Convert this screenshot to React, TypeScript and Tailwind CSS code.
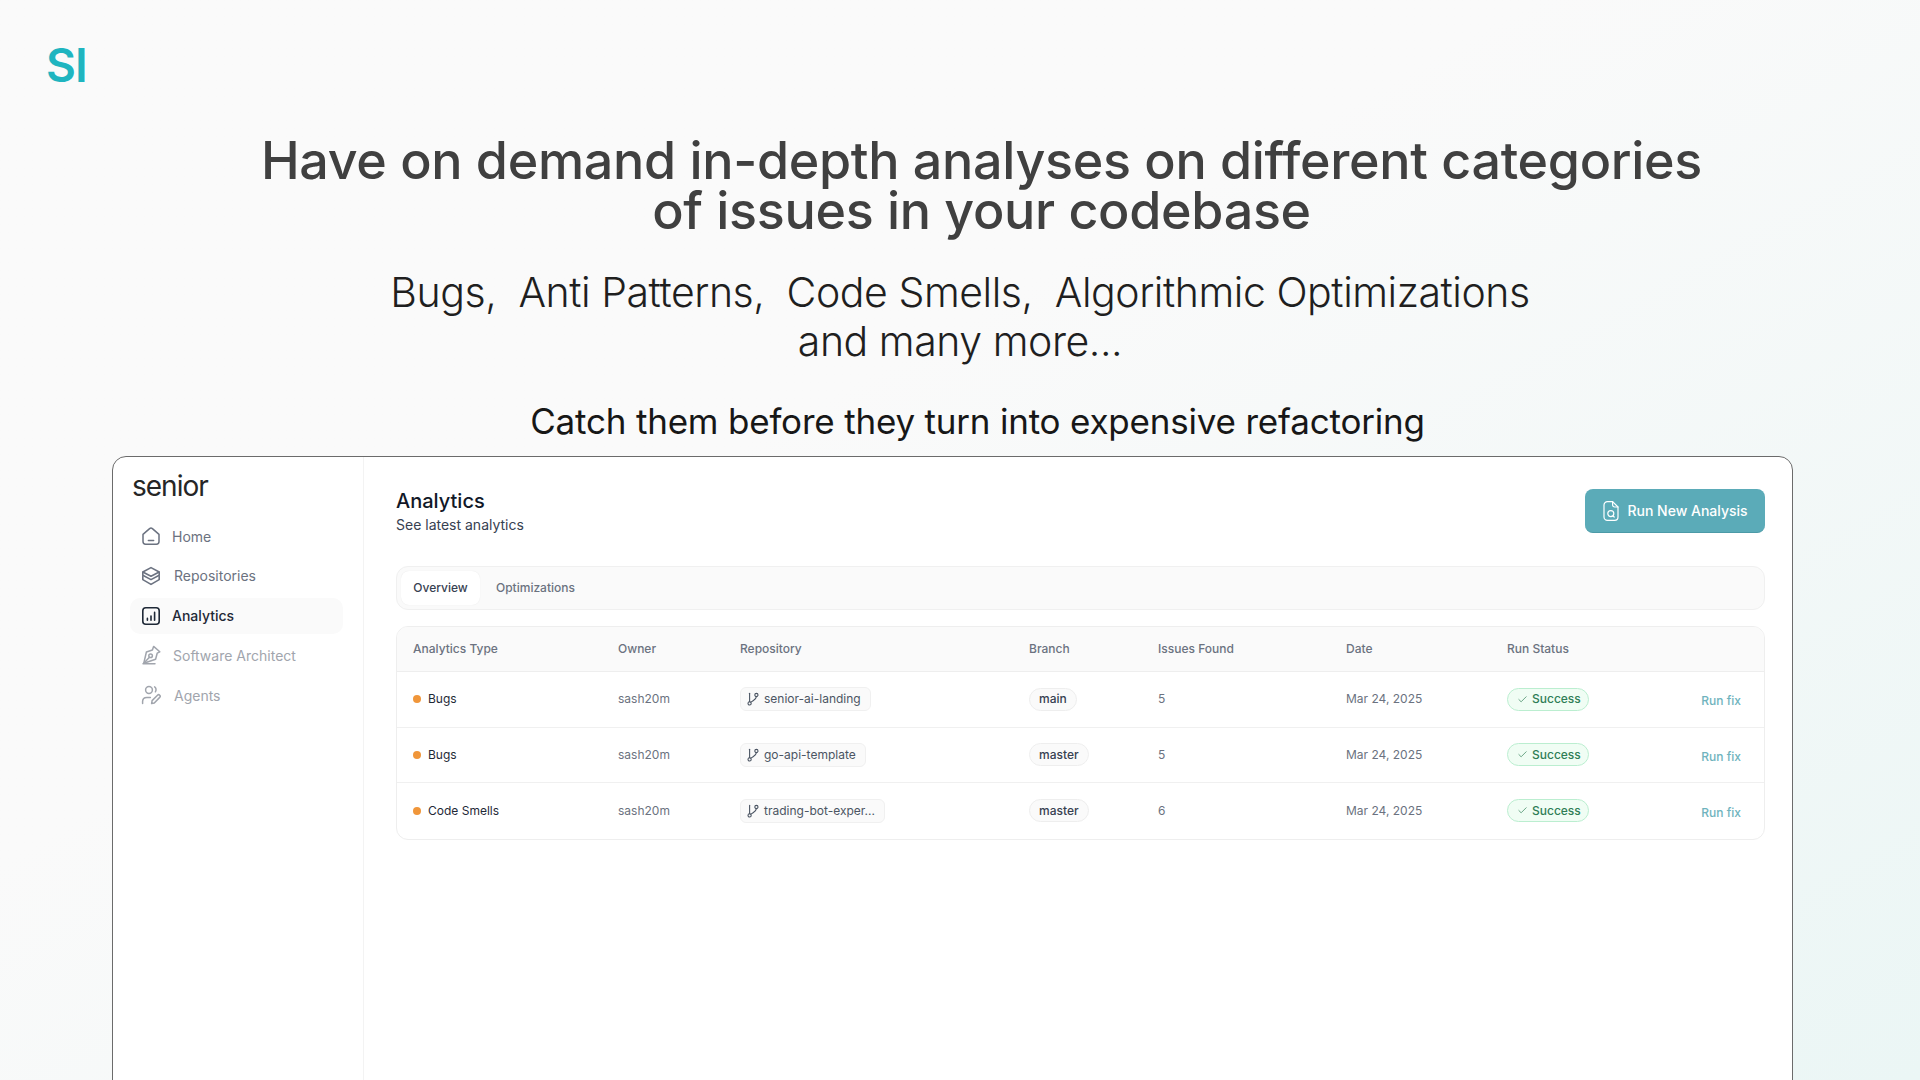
import { Check } from 'lucide-react'

const rows = [
  { type: 'Bugs', repo: 'senior-ai-landing', branch: 'main', issues: '5' },
  { type: 'Bugs', repo: 'go-api-template', branch: 'master', issues: '5' },
  { type: 'Code Smells', repo: 'trading-bot-exper...', branch: 'master', issues: '6' },
]

const cols = 'grid grid-cols-[205px_122px_289px_129px_188px_161px_1fr] pl-[16px] items-center'

function HomeIcon() {
  return (
    <svg width="20" height="20" viewBox="0 0 20 20" fill="none" stroke="currentColor" strokeWidth="1.5" strokeLinecap="round" strokeLinejoin="round">
      <path d="M2 8.4 8.6 2.6a2.1 2.1 0 0 1 2.8 0L18 8.4v7.2a2.6 2.6 0 0 1-2.6 2.6H4.6A2.6 2.6 0 0 1 2 15.6z" />
      <path d="M7.4 14.6h5.2" />
    </svg>
  )
}

function StackIcon() {
  return (
    <svg width="20" height="20" viewBox="0 0 20 20" fill="none" stroke="currentColor" strokeWidth="1.6" strokeLinecap="round" strokeLinejoin="round">
      <path d="M10 1.6 18.2 6 10 10.2 1.8 6z" />
      <path d="M1.8 6.4v2.8L10 13.6l8.2-4.4V6.4" />
      <path d="M1.8 10.4v3.2L10 18.4l8.2-4.8v-3.2" />
    </svg>
  )
}

function ChartIcon() {
  return (
    <svg width="20" height="20" viewBox="0 0 20 20" fill="none" stroke="currentColor" strokeWidth="1.6" strokeLinecap="round">
      <rect x="1.8" y="1.8" width="16.4" height="16.4" rx="3" />
      <path d="M6.4 14.2v-1.8M10 14.2V10M13.6 14.2V6.4" />
    </svg>
  )
}

function PenIcon() {
  return (
    <svg width="20" height="20" viewBox="0 0 20 20" fill="none" stroke="currentColor" strokeWidth="1.5" strokeLinecap="round" strokeLinejoin="round">
      <path d="M12.6 1.4 18.8 6.8l-2.6 1.4-1.6 6-11.8 4 2.6-11.2 6-2z" />
      <path d="M3 18 8.2 12.6" />
      <circle cx="9.6" cy="10.8" r="1.8" />
      <path d="m2 18.8 12-.1" />
    </svg>
  )
}

function AgentIcon() {
  return (
    <svg width="20" height="20" viewBox="0 0 20 20" fill="none" stroke="currentColor" strokeWidth="1.5" strokeLinecap="round" strokeLinejoin="round">
      <circle cx="8" cy="5" r="3.4" />
      <path d="M13.6 1.8c1.4.8 2 3.2.8 5" />
      <path d="M1.6 18.4v-1.8c0-2.6 1.8-4.2 4.2-4.2h3.6" />
      <path d="m10.6 18.6.5-3 5.4-5.4a1.5 1.5 0 0 1 2.2 2.2l-5.4 5.6z" />
    </svg>
  )
}

function BranchIcon() {
  return (
    <svg width="12" height="14" viewBox="0 0 12 14" fill="none" stroke="currentColor" strokeWidth="1.1" strokeLinecap="round">
      <path d="M2.6 1.2v8.6" />
      <circle cx="2.6" cy="11.4" r="1.6" />
      <circle cx="9.4" cy="3" r="1.6" />
      <path d="M9.4 4.6c0 3-3.2 3.6-5.6 5.6" />
    </svg>
  )
}

function ReportIcon() {
  return (
    <svg width="18" height="22" viewBox="0 0 18 22" fill="none" stroke="currentColor" strokeWidth="1.2" strokeLinecap="round" strokeLinejoin="round">
      <path d="M10.6 1.6H5.4A3.4 3.4 0 0 0 2 5v12a3.4 3.4 0 0 0 3.4 3.4h7.2A3.4 3.4 0 0 0 16 17V7z" />
      <path d="M10.6 1.6V5a2 2 0 0 0 2 2H16" />
      <circle cx="8.8" cy="13.6" r="3" />
      <path d="m11 15.8 1.2 1.2" />
    </svg>
  )
}

const nav = [
  { label: 'Home', icon: <HomeIcon />, cls: 'text-[#6b7280]', gap: 'gap-[11px]' },
  { label: 'Repositories', icon: <StackIcon />, cls: 'text-[#6b7280]', gap: 'gap-[13px]' },
  { label: 'Analytics', icon: <ChartIcon />, cls: 'text-[#1f2937] font-medium bg-[#fafafa]', gap: 'gap-[11px]' },
  { label: 'Software Architect', icon: <PenIcon />, cls: 'text-[#a1a5ad]', gap: 'gap-[12px]' },
  { label: 'Agents', icon: <AgentIcon />, cls: 'text-[#a1a5ad]', gap: 'gap-[13px]' },
]

export default function App() {
  return (
    <div className="h-screen overflow-hidden bg-gradient-to-br from-[#fafafa] from-40% to-[#ebf6f5] font-['Inter',sans-serif] flex flex-col">
      <div className="pl-[46px] pt-[40px] h-[92px] text-[#1fb5c0] text-[46px] leading-[50px] font-semibold tracking-[-1px]">SI</div>

      <div className="text-center">
        <h1 className="mt-[46px] pl-[43px] text-[#404040] text-[52px] leading-[50px] font-medium tracking-[-0.3px]">
          Have on demand in-depth analyses on different categories<br />of issues in your codebase
        </h1>
        <p className="mt-[32px] text-[#1f1f1f] text-[41px] leading-[49px] font-light tracking-[-0.45px]">
          Bugs,&nbsp; Anti Patterns,&nbsp; Code Smells,&nbsp; Algorithmic Optimizations<br />and many more...
        </p>
        <p className="mt-[33px] pl-[35px] text-[#171717] text-[35px] leading-[44px] tracking-[-0.2px]">
          Catch them before they turn into expensive refactoring
        </p>
      </div>

      <div className="mt-[13px] ml-[112px] mr-[127px] h-[700px] shrink-0 bg-white border border-[#6b6b6b] rounded-[14px] flex">
        <aside className="w-[251px] shrink-0 border-r border-[#f3f3f3] pl-[17px] pr-[20px]">
          <div className="mt-[11px] pl-[2px] text-[#262626] text-[28px] leading-[36px] tracking-[-1px]">senior</div>
          <nav className="mt-[14px] flex flex-col gap-[3.75px]">
            {nav.map((item) => (
              <div key={item.label} className={`h-[36px] rounded-[10px] pl-[11px] flex items-center text-[14px] ${item.gap} ${item.cls}`}>
                {item.icon}
                {item.label}
              </div>
            ))}
          </nav>
        </aside>

        <main className="flex-1 pl-[32px] pr-[27px]">
          <div className="mt-[31px] flex justify-between items-start">
            <div>
              <h2 className="text-[#111827] text-[20px] leading-[27px] font-medium">Analytics</h2>
              <p className="text-[#374151] text-[14px] leading-[20px]">See latest analytics</p>
            </div>
            <button className="mt-[1px] h-[44px] w-[180px] rounded-[8px] bg-[#5babb8] border-b border-[#4c9aa7] text-white text-[14px] font-medium flex items-center justify-center gap-[7px]">
              <ReportIcon />
              Run New Analysis
            </button>
          </div>

          <div className="mt-[31px] h-[44px] rounded-[12px] border border-[#f0f0f0] bg-[#fafafa] flex items-center pl-[4px] text-[12px] font-medium">
            <div className="h-[34px] w-[79px] rounded-[8px] bg-white text-[#374151] flex items-center justify-center shadow-[0_0_1px_rgba(0,0,0,0.1)]">Overview</div>
            <div className="ml-[16px] text-[#6b7280]">Optimizations</div>
          </div>

          <div className="mt-[16px] rounded-[12px] border border-[#eeeeee] overflow-hidden text-[12px]">
            <div className={`${cols} h-[45px] bg-[#fafafa] text-[#6b7280] font-medium border-b border-[#eeeeee]`}>
              <div>Analytics Type</div>
              <div>Owner</div>
              <div>Repository</div>
              <div>Branch</div>
              <div>Issues Found</div>
              <div>Date</div>
              <div>Run Status</div>
            </div>
            {rows.map((row, i) => (
              <div key={i} className={`${cols} h-[55.6px] ${i < 2 ? 'border-b border-[#f0f0f0]' : ''}`}>
                <div className="flex items-center gap-[7px] text-[#1f2937]">
                  <span className="w-[8px] h-[8px] rounded-full bg-[#f0963a]" />
                  {row.type}
                </div>
                <div className="text-[#6b7280]">sash20m</div>
                <div>
                  <span className="inline-flex items-center h-[24px] pl-[6px] pr-[9px] gap-[5px] rounded-[6px] border border-[#f0f0f0] bg-[#fafafa] text-[#4b5563]">
                    <BranchIcon />
                    {row.repo}
                  </span>
                </div>
                <div>
                  <span className="inline-flex items-center h-[23px] px-[9px] rounded-full border border-[#eeeeee] bg-[#fafafa] text-[#374151] font-medium">{row.branch}</span>
                </div>
                <div className="text-[#6b7280]">{row.issues}</div>
                <div className="text-[#6b7280]">Mar 24, 2025</div>
                <div className="flex items-center justify-between pr-[23px]">
                  <span className="inline-flex items-center h-[23px] pl-[9px] pr-[7px] gap-[4px] rounded-full border border-[#bbeed0] bg-[#f0fdf4] text-[#2f7d56] font-medium">
                    <Check size={11} strokeWidth={1.5} />
                    Success
                  </span>
                  <span className="mt-[4px] text-[#6fb3bd] font-medium">Run fix</span>
                </div>
              </div>
            ))}
          </div>
        </main>
      </div>
    </div>
  )
}
